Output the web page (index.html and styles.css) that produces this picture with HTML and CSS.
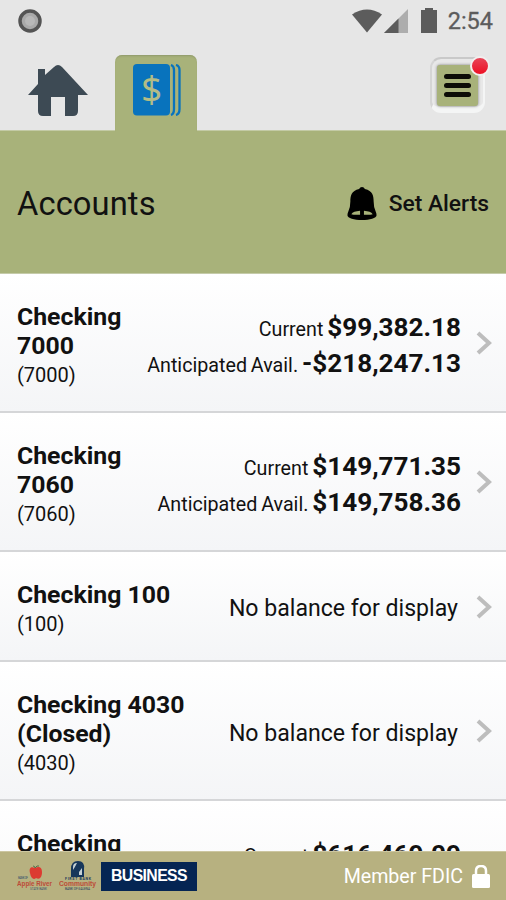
FILE: index.html
```html
<!DOCTYPE html>
<html lang="en">
<head>
    <meta charset="UTF-8">
    <meta name="viewport" content="width=device-width, initial-scale=1.0">
    <title>Accounts</title>
    <link rel="stylesheet" href="styles.css">
</head>
<body>

    <!-- Status Bar -->
    <div class="status-bar">
        <svg class="record" viewBox="0 0 24 24"><circle cx="12" cy="12" r="10" fill="#a9a9a9" stroke="#545454" stroke-width="3.5"/><circle cx="12" cy="12" r="5" fill="#b8b8b8"/></svg>
        <div class="status-icons">
            <svg width="30" height="24" viewBox="0 0 30 24"><path d="M0 5.5Q15-4.5 30 5.5L15 23.5Z" fill="#5c5c5c"/></svg>
            <svg class="signal" width="24" height="24" viewBox="0 0 24 24"><path d="M24 0V24H0Z" fill="#adadad"/><path d="M14.5 9.5V24H0Z" fill="#5c5c5c"/></svg>
            <svg class="battery" width="16" height="25" viewBox="0 0 16 25"><path d="M4 0h8v2h4v23H0V2h4Z" fill="#5c5c5c"/></svg>
            <span class="clock">2:54</span>
        </div>
    </div>

    <!-- Tabs -->
    <div class="tabs">
        <div class="tab-home">
            <svg width="60" height="54" viewBox="0 0 60 54"><path d="M10 5h7v6l9-8q4-4 8 0l26 28H50v16q0 5-5 5h-8V33H23v19h-8q-5 0-5-5V31H0l10-11Z" fill="#3d4a54"/></svg>
        </div>
        <div class="tab-accounts">
            <svg width="48" height="52" viewBox="0 0 48 52">
                <rect width="37" height="51.500" rx="4" fill="#0873bd"/>
                <path d="M38 1q3 1 3 5v39q0 5-3 6M43 1q3.500 1 3.500 5v39q0 5-3.500 6" fill="none" stroke="#0873bd" stroke-width="2.300"/>
                <text class="dollar" x="18.500" y="38" text-anchor="middle" fill="#b3bc86">$</text>
            </svg>
        </div>
        <div class="menu-button">
            <div class="menu-lines"><span></span><span></span><span></span></div>
            <div class="badge"></div>
        </div>
    </div>

    <!-- Page Header -->
    <div class="page-header">
        <h1>Accounts</h1>
        <div class="alerts">
            <svg width="30" height="33" viewBox="0 0 30 34"><path d="M15 0q2 0 3 2c8 2 9 7 9 13q0 6 2 10 1 2 1 4c0 3-7 5-15 5s-15-2-15-5q0-2 1-4 2-4 2-10c0-6 1-11 9-13q1-2 3-2Z"/><path d="M4 28q2-3 9-3.500v4q-6 .5-9-.5ZM26 28q-2-3-9-3.500v4q6 .5 9-.5Z" fill="#a8b27a"/></svg>
            <span>Set Alerts</span>
        </div>
    </div>

    <!-- Account List -->
    <div class="account-list">
        <div class="account">
            <div class="name"><h2>Checking 7000</h2><p>(7000)</p></div>
            <div class="balance"><p>Current <b>$99,382.18</b></p><p>Anticipated Avail. <b>-$218,247.13</b></p></div>
            <svg class="arrow" viewBox="0 0 16 24"><path d="M2 2L13 12L2 22"/></svg>
        </div>
        <div class="account">
            <div class="name"><h2>Checking 7060</h2><p>(7060)</p></div>
            <div class="balance"><p>Current <b>$149,771.35</b></p><p>Anticipated Avail. <b>$149,758.36</b></p></div>
            <svg class="arrow" viewBox="0 0 16 24"><path d="M2 2L13 12L2 22"/></svg>
        </div>
        <div class="account">
            <div class="name wide"><h2>Checking 100</h2><p>(100)</p></div>
            <div class="no-balance">No balance for display</div>
            <svg class="arrow" viewBox="0 0 16 24"><path d="M2 2L13 12L2 22"/></svg>
        </div>
        <div class="account">
            <div class="name wide"><h2>Checking 4030 (Closed)</h2><p>(4030)</p></div>
            <div class="no-balance">No balance for display</div>
            <svg class="arrow" viewBox="0 0 16 24"><path d="M2 2L13 12L2 22"/></svg>
        </div>
        <div class="account">
            <div class="name"><h2>Checking 8000</h2><p>(8000)</p></div>
            <div class="balance"><p>Current <b>$616,469.09</b></p><p>Anticipated Avail. <b>$616,469.09</b></p></div>
            <svg class="arrow" viewBox="0 0 16 24"><path d="M2 2L13 12L2 22"/></svg>
        </div>
    </div>

    <!-- Footer -->
    <div class="footer">
        <svg class="apple-logo" width="36" height="26" viewBox="0 0 36 26">
            <path d="M18 3c-5-2-6 1-5 5 1 6 4 7 6 5 4 2 6-1 6-6s-3-6-7-4Z" fill="#dc3b31"/>
            <path d="M18 3q0-2-2-2M18 3q2-3 4-2" fill="none" stroke="#52714b"/>
            <text x="1" y="14" font-size="3" fill="#35516d" textLength="10">BANK OF</text>
            <text class="logo-name" x="0" y="20.500" font-size="8" fill="#bd4b38" textLength="35" lengthAdjust="spacingAndGlyphs">Apple River</text>
            <text x="13" y="24.500" font-size="3" fill="#35516d" textLength="17">STATE BANK</text>
        </svg>
        <svg class="community-logo" width="38" height="30" viewBox="0 0 38 30">
            <path d="M12 17V9q0-8 7-8t6 8v8Z" fill="#17375b"/>
            <path d="M14 7q0-4 4-4-2 4-4 7ZM20 12l3-4v7h-3Z" fill="#c5d1d5"/>
            <text x="6" y="20" font-size="3.500" font-weight="700" fill="#17375b" textLength="26">FIRST BANK</text>
            <text class="logo-name" x="0" y="26" font-size="8" fill="#bd4b38" textLength="37" lengthAdjust="spacingAndGlyphs">Community</text>
            <text x="6" y="29.500" font-size="3" fill="#17375b" textLength="25">BANK OF GALENA</text>
        </svg>
        <div class="business">BUSINESS</div>
        <div class="fdic">Member FDIC</div>
        <svg class="lock" width="18" height="23" viewBox="0 0 18 23"><path d="M4 11V6q0-5 5-5t5 5v5" fill="none" stroke="#fff" stroke-width="2.500"/><rect y="9" width="18" height="14" rx="1.500" fill="#fff"/></svg>
    </div>

</body>
</html>
```
FILE: styles.css
```css
* { margin: 0; padding: 0; box-sizing: border-box; font-family: Roboto, 'Liberation Sans', sans-serif; }
body { background: #e6e6e6; color: #111; width: 506px; height: 900px; display: flex; flex-direction: column; overflow: hidden; }
svg { display: block; flex-shrink: 0; }

/* Status Bar */
.status-bar { height: 41px; padding: 0 13px 0 18px; display: flex; justify-content: space-between; align-items: center; }
.record { width: 24px; height: 24px; }
.status-icons { display: flex; align-items: center; }
.signal { margin-left: 2px; }
.battery { margin-left: 13px; }
.clock { margin-left: 11px; font-size: 23.5px; font-weight: 400; color: #5c5c5c; -webkit-text-stroke: 0.3px #5c5c5c; }

/* Tabs */
.tabs { height: 89px; display: flex; align-items: flex-start; padding: 14px 21px 0 28px; }
.tab-home { padding-top: 9px; width: 87px; }
.tab-accounts { position: relative; width: 82px; height: 77px; background: #a8b27a; border-radius: 7px 7px 0 0; padding: 9px 0 0 18px; box-shadow: inset 0 2px 2px -1px #8f996a; }
.dollar { font-family: 'Noto Sans', 'Open Sans', sans-serif; font-size: 37px; }
.menu-button { position: relative; margin: 2px 0 0 auto; width: 55px; height: 56px; border-radius: 11px; background: #e8e8e8; border: 2px solid #f4f5f5; border-top-color: #c9c9c9; border-left-color: #d5d5d5; border-bottom-width: 6px; padding: 6px 5px 4px; }
.menu-lines { width: 41px; height: 41px; background: #a8b27a; border-radius: 3px; box-shadow: 0 0 3px #777; display: flex; flex-direction: column; align-items: center; justify-content: center; gap: 4px; }
.menu-lines span { width: 27px; height: 5px; border-radius: 3px; background: #0c0c06; }
.badge { position: absolute; top: -3px; right: -7px; width: 20px; height: 20px; border-radius: 50%; background: linear-gradient(#e84457, #ed1024); border: 2px solid #f2eeee; }

/* Page Header */
.page-header { height: 144px; background: #a8b27a; border-bottom: 1px solid #c5cba9; border-top: 1px solid #c3caa5; padding: 3px 17px 0; display: flex; justify-content: space-between; align-items: center; }
.page-header h1 { font-size: 32.7px; font-weight: 400; letter-spacing: 0.1px; }
.alerts { display: flex; align-items: center; gap: 12px; font-size: 22.8px; font-weight: 500; }
.alerts svg { margin-top: -1px; }

/* Account List */
.account-list { flex: 1; overflow: hidden; background: #fff; }
.account { display: flex; align-items: center; padding: 28px 14px 21px 17px; background: linear-gradient(#fff, #f4f5f7); border-bottom: 2px solid #d5d6d8; }
.name { width: 120px; }
.name.wide { width: 185px; }
.name h2 { font-size: 24.8px; line-height: 29px; font-weight: 700; }
.name p { font-size: 20px; line-height: 30px; }
.balance { margin: -1px 0 0 auto; text-align: right; font-size: 19.7px; line-height: 35px; word-spacing: -1px; white-space: nowrap; }
.balance b { font-size: 26.1px; }
.balance p { height: 36px; }
.no-balance { margin-left: auto; font-size: 23.1px; padding-right: 3px; margin-top: -2px; }
.arrow { width: 16px; height: 24px; margin: -6px 0 0 15px; fill: none; stroke: #bdbdbd; stroke-width: 4; }

/* Footer */
.footer { height: 49px; background: #b7b180; border-top: 1px solid #ccc6a0; padding: 0 16px 0 17px; display: flex; align-items: center; }
.apple-logo { margin-top: 3px; }
.community-logo { margin-left: 6px; margin-top: -2px; }
.logo-name { font-family: 'Liberation Sans', sans-serif; font-weight: 700; }
.business { margin-left: 4px; width: 96px; height: 29px; line-height: 28px; background: #052553; color: #fff; font-family: 'Liberation Sans', sans-serif; font-weight: 700; font-size: 15.8px; letter-spacing: -0.6px; text-align: center; }
.fdic { margin-left: auto; color: #fff; font-size: 19.6px; padding-top: 1px; }
.lock { margin-left: 9px; }
```
